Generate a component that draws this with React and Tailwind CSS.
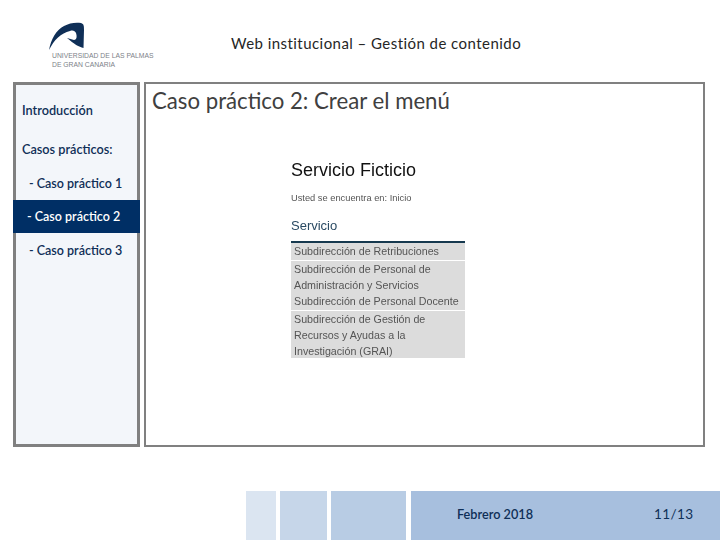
import React from "react";

const navy = "text-[#0f2f57]";

function Logo() {
  return (
    <div className="w-[120px] ml-[49px] mt-[22px]">
      <svg width="36" height="29" viewBox="0 0 36 29" className="block">
        <path
          d="M0 28 C2 17 7 8 15 4 C20 1 27 0 32 1 C35 2 35 4 35 8 L34.5 26 C30 25 25 22 18 16 L25 18 C28 18 28 14 27 11 C26 9 24 8 21 9 C12 11 5 18 0 28 Z"
          fill="#0f2f57"
        />
      </svg>
      <p className="font-['Liberation_Sans',sans-serif] text-[6.8px] leading-[9px] text-[#7d8288] whitespace-nowrap ml-[3px]">
        UNIVERSIDAD DE LAS PALMAS
        <br />
        DE GRAN CANARIA
      </p>
    </div>
  );
}

function SideLabel({ children, className }) {
  return (
    <p className={"pl-[6px] text-[12.7px] font-semibold leading-[18px] " + navy + " " + className}>{children}</p>
  );
}

function Sidebar() {
  return (
    <aside className="w-[127px] border-[3px] border-[#808080] bg-[#f3f6fa] pt-[16px]">
      <SideLabel>Introducción</SideLabel>
      <SideLabel className="mt-[21px]">Casos prácticos:</SideLabel>
      <div className="mt-[9px] text-[12.5px] font-semibold whitespace-nowrap">
        <div className={"h-[33px] flex items-center pt-[2px] pl-[13px] " + navy}>- Caso práctico 1</div>
        <div className="h-[33px] flex items-center pt-[1px] -mx-[3px] pl-[14px] bg-[#002f65] text-white">- Caso práctico 2</div>
        <div className={"h-[33px] flex items-center pt-[3px] pl-[13px] " + navy}>- Caso práctico 3</div>
      </div>
    </aside>
  );
}

function Shot() {
  return (
    <div className="ml-[145px] mt-[44px] w-[174px] font-['Liberation_Sans',sans-serif] blur-[0.3px]">
      <h2 className="text-[18px] leading-[22px] text-[#111]">Servicio Ficticio</h2>
      <p className="mt-[11px] text-[9.3px] leading-[12px] text-[#555] whitespace-nowrap">Usted se encuentra en: Inicio</p>
      <h3 className="mt-[14px] text-[13px] leading-[16px] text-[#2a4a63]">Servicio</h3>
      <div className="mt-[7px] border-t-2 border-[#16394f] text-[10.7px] leading-[16px] text-[#555] whitespace-nowrap">
        <div className="bg-[#dcdcdc] px-[3px] h-[17px]">Subdirección de Retribuciones</div>
        <div className="bg-[#dcdcdc] px-[3px] mt-px h-[49px]">
          Subdirección de Personal de
          <br />
          Administración y Servicios
          <br />
          Subdirección de Personal Docente
        </div>
        <div className="bg-[#dcdcdc] px-[3px] mt-px h-[47px]">
          Subdirección de Gestión de
          <br />
          Recursos y Ayudas a la
          <br />
          Investigación (GRAI)
        </div>
      </div>
    </div>
  );
}

export default function App() {
  return (
    <div className="w-[720px] h-[540px] bg-white font-['Lato',sans-serif] overflow-hidden flex flex-col">
      <header className="h-[82px] flex shrink-0">
        <Logo />
        <h1 className="ml-[62px] mt-[33px] text-[15px] tracking-[0.45px] leading-[20px] text-[#262626] whitespace-nowrap">
          Web institucional – Gestión de contenido
        </h1>
      </header>

      <div className="flex h-[365px] pl-[13px] gap-[4px] shrink-0">
        <Sidebar />
        <main className="w-[561px] border-2 border-[#808080] bg-white">
          <h2 className="ml-[6px] mt-[3px] text-[22.2px] leading-[28px] text-[#404040] whitespace-nowrap">
            Caso práctico 2: Crear el menú
          </h2>
          <Shot />
        </main>
      </div>

      <footer className="mt-[44px] h-[49px] pl-[246px] flex shrink-0">
        <div className="w-[30px] bg-[#dbe5f1]" />
        <div className="w-[47px] ml-[4px] bg-[#c6d6e9]" />
        <div className="w-[75px] ml-[4px] bg-[#b8cce4]" />
        <div className={"w-[309px] ml-[5px] bg-[#a7bfde] flex items-center pb-[1px] " + navy}>
          <span className="ml-[46px] text-[12.7px] font-semibold">Febrero 2018</span>
          <span className="ml-[121px] mb-[2px] text-[13.5px] tracking-[0.4px]">11/13</span>
        </div>
      </footer>
    </div>
  );
}
